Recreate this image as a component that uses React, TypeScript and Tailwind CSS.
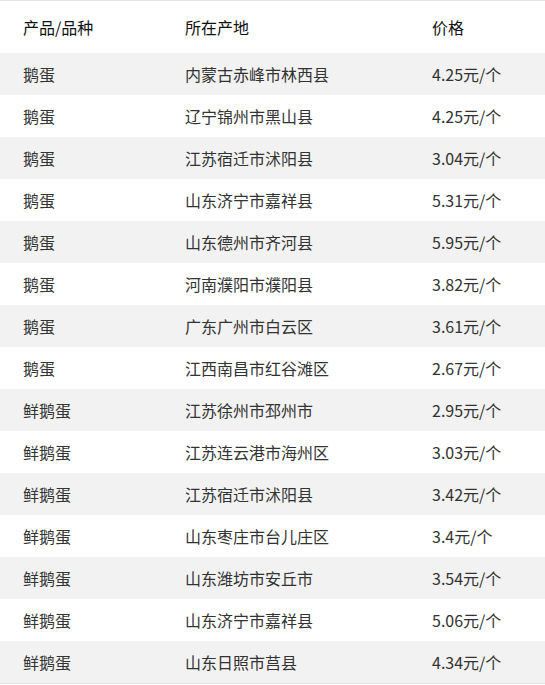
const rows: [string, string, string][] = [
  ['鹅蛋', '内蒙古赤峰市林西县', '4.25元/个'],
  ['鹅蛋', '辽宁锦州市黑山县', '4.25元/个'],
  ['鹅蛋', '江苏宿迁市沭阳县', '3.04元/个'],
  ['鹅蛋', '山东济宁市嘉祥县', '5.31元/个'],
  ['鹅蛋', '山东德州市齐河县', '5.95元/个'],
  ['鹅蛋', '河南濮阳市濮阳县', '3.82元/个'],
  ['鹅蛋', '广东广州市白云区', '3.61元/个'],
  ['鹅蛋', '江西南昌市红谷滩区', '2.67元/个'],
  ['鲜鹅蛋', '江苏徐州市邳州市', '2.95元/个'],
  ['鲜鹅蛋', '江苏连云港市海州区', '3.03元/个'],
  ['鲜鹅蛋', '江苏宿迁市沭阳县', '3.42元/个'],
  ['鲜鹅蛋', '山东枣庄市台儿庄区', '3.4元/个'],
  ['鲜鹅蛋', '山东潍坊市安丘市', '3.54元/个'],
  ['鲜鹅蛋', '山东济宁市嘉祥县', '5.06元/个'],
  ['鲜鹅蛋', '山东日照市莒县', '4.34元/个'],
]

export default function App() {
  return (
    <div
      className="w-[545px] bg-white text-[16px]"
      style={{ fontFamily: '"Noto Sans CJK SC", "Noto Sans", sans-serif' }}
    >
      <div className="border-t border-b border-[#e4e4e4]">
        {/* header */}
        <div className="grid grid-cols-[162px_247px_1fr] pl-[23px] h-[52px] items-center text-[#111]">
          <div>产品/品种</div>
          <div>所在产地</div>
          <div>价格</div>
        </div>
        {rows.map((r, i) => (
          <div
            key={i}
            className={`grid grid-cols-[162px_247px_1fr] pl-[23px] h-[42px] items-center text-[#333] ${
              i % 2 === 0 ? 'bg-[#f2f2f2]' : 'bg-white'
            }`}
          >
            <div>{r[0]}</div>
            <div>{r[1]}</div>
            <div>{r[2]}</div>
          </div>
        ))}
      </div>
    </div>
  )
}
